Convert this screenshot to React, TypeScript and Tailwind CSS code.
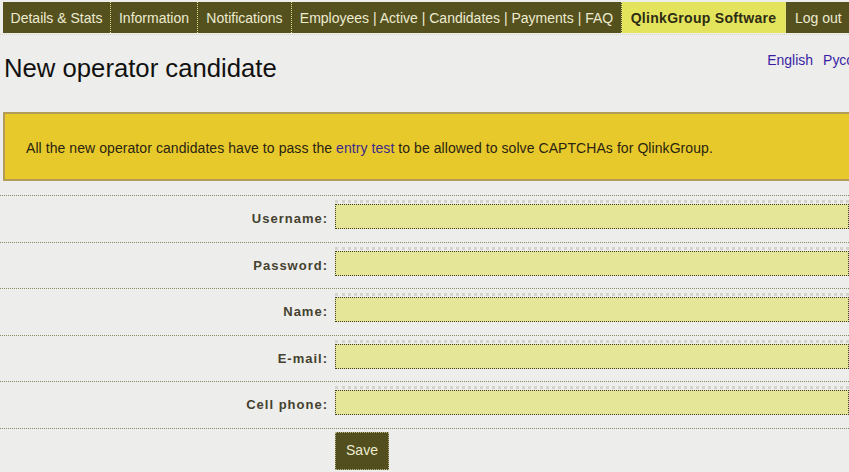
import React from 'react';

const tabs = [
  { label: 'Details & Stats', w: 'w-[108px]' },
  { label: 'Information', w: 'w-[87px]' },
  { label: 'Notifications', w: 'w-[94px]' },
  { label: 'Employees | Active | Candidates | Payments | FAQ', w: 'w-[330px]' },
  { label: 'QlinkGroup Software', w: 'w-[164px]', active: true },
  { label: 'Log out', w: 'w-[80px] justify-start pl-[9px]' },
];

const fields = ['Username:', 'Password:', 'Name:', 'E-mail:', 'Cell phone:'];

export default function App() {
  return (
    <div className="w-[849px] h-[472px] overflow-hidden bg-[#ededeb] font-['Liberation_Sans',Arial,sans-serif]">
      {/* Top navigation */}
      <div className="pt-[2px] pl-[3px] border-b border-dotted border-[#d8d8c0] pb-[1px]">
        <div className="flex whitespace-nowrap">
          {tabs.map((t) => (
            <div
              key={t.label}
              className={`${t.w} shrink-0 h-[31px] flex items-center justify-center pt-[1px] text-[14px] border-r border-dotted border-[#e0e08a] ${
                t.active
                  ? 'bg-[#e4e45c] text-[#2e2c14] font-bold tracking-[0.3px]'
                  : 'bg-[#55511f] text-[#ecebd0]'
              }`}
            >
              {t.label}
            </div>
          ))}
        </div>
      </div>

      {/* Title row */}
      <div className="flex justify-between items-start h-[77px]">
        <h1 className="pl-[4px] pt-[17px] text-[25.7px] leading-[32px] text-[#111]">New operator candidate</h1>
        <div className="flex gap-[10px] pt-[15px] text-[14px] text-[#3b1ea6] whitespace-nowrap -mr-[26px]">
          <span>English</span>
          <span>Русский</span>
        </div>
      </div>

      {/* Notice */}
      <div className="ml-[3px] h-[69px] border-y-2 border-l-2 border-[#b39b58] bg-[#e8c92c] flex items-center pl-[21px] pt-[4px] text-[14px] tracking-[0.07px] text-[#2a2410]">
        <span>
          All the new operator candidates have to pass the <span className="text-[#3b2a8a]">entry test</span> to be allowed to solve CAPTCHAs for QlinkGroup.
        </span>
      </div>

      {/* Form */}
      <div className="mt-[14px]">
        {fields.map((f) => (
          <div key={f} className="flex items-start h-[46.6px] border-t border-dotted border-[#8a8a60] pt-[4px]">
            <label className="w-[328px] mt-[11px] text-right text-[13px] leading-[16px] font-bold tracking-[1px] text-[#44422f]">{f}</label>
            <div className="ml-[7px] flex-1 border-t-[3px] border-dotted border-[#d4d4cc] pt-[1px]">
              <div className="h-[25px] bg-[#e6e698] border border-dotted border-[#3e3c28]" />
            </div>
          </div>
        ))}
        <div className="border-t border-dotted border-[#8a8a60] pt-[3px] pl-[335px]">
          <button className="w-[54px] h-[38px] bg-[#534e1e] text-[#ecebd0] text-[14px] border border-dotted border-[#b8b890]">
            Save
          </button>
        </div>
      </div>
    </div>
  );
}
